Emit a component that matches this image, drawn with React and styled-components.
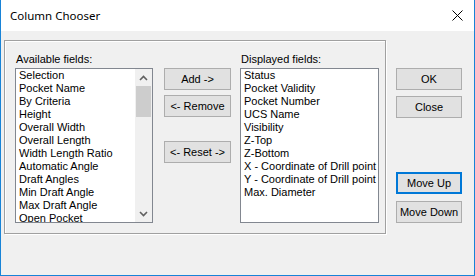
import React from "react";
import styled, { createGlobalStyle } from "styled-components";

const Global = createGlobalStyle`
  html, body {
    margin: 0;
    padding: 0;
    background: #f0f0f0;
  }
  * {
    box-sizing: border-box;
  }
`;

const Window = styled.div`
  width: 475px;
  height: 276px;
  background: #f0f0f0;
  border: 1px solid #1883d7;
  border-top: none;
  display: flex;
  flex-direction: column;
  font-family: "Liberation Sans", Arial, sans-serif;
  font-size: 11px;
  color: #000;
`;

const TitleBar = styled.div`
  height: 31px;
  background: #fff;
  display: flex;
  align-items: center;
  justify-content: space-between;
  padding: 0 10px 1px 9px;
`;

const Title = styled.div`
  font-family: "Noto Sans", "Open Sans", sans-serif;
  font-size: 11.5px;
  color: #000;
`;

const CloseX = styled.svg`
  width: 11px;
  height: 11px;
  margin-right: 1px;
`;

const Body = styled.div`
  flex: 1;
  display: flex;
  padding: 9px 0 0 3px;
`;

const GroupBox = styled.div`
  width: 382px;
  height: 194px;
  border: 1px solid #a0a0a0;
  box-shadow: inset 1px 1px 0 #fff, 1px 1px 0 #fff;
  display: flex;
  padding: 12px 0 0 10px;
`;

const ListColumn = styled.div`
  display: flex;
  flex-direction: column;
`;

const Label = styled.div`
  line-height: 13px;
  height: 13px;
  margin-bottom: 2px;
  padding-left: 1px;
`;

const ListBox = styled.div`
  width: ${(p) => p.$w}px;
  height: 155px;
  background: #fff;
  border: 1px solid #828790;
  display: flex;
  overflow: hidden;
`;

const Items = styled.div`
  flex: 1;
  padding: 0 0 0 3px;
  overflow: hidden;
`;

const Item = styled.div`
  line-height: 13px;
  height: 13px;
  white-space: nowrap;
`;

const ScrollBar = styled.div`
  width: 17px;
  background: #f0f0f0;
  display: flex;
  flex-direction: column;
`;

const Arrow = styled.div`
  height: 17px;
  display: flex;
  align-items: center;
  justify-content: center;
`;

const Track = styled.div`
  flex: 1;
  display: flex;
  flex-direction: column;
`;

const Thumb = styled.div`
  height: 31px;
  margin: 0 1px;
  background: #cdcdcd;
`;

const MidButtons = styled.div`
  display: flex;
  flex-direction: column;
  margin: 15px 0 0 11px;
  gap: 5px;
`;

const SideButtons = styled.div`
  display: flex;
  flex-direction: column;
  margin: 28px 0 0 10px;
`;

const Button = styled.div`
  width: ${(p) => p.$w || 66}px;
  height: 22px;
  background: #e1e1e1;
  border: ${(p) => (p.$focus ? "2px solid #0078d7" : "1px solid #adadad")};
  display: flex;
  align-items: center;
  justify-content: center;
  margin-top: ${(p) => p.$mt || 0}px;
  line-height: 13px;
`;

const available = [
  "Selection",
  "Pocket Name",
  "By Criteria",
  "Height",
  "Overall Width",
  "Overall Length",
  "Width Length Ratio",
  "Automatic Angle",
  "Draft Angles",
  "Min Draft Angle",
  "Max Draft Angle",
  "Open Pocket",
];

const displayed = [
  "Status",
  "Pocket Validity",
  "Pocket Number",
  "UCS Name",
  "Visibility",
  "Z-Top",
  "Z-Bottom",
  "X - Coordinate of Drill point",
  "Y - Coordinate of Drill point",
  "Max. Diameter",
];

const Chevron = ({ up }) => (
  <svg width="9" height="6" viewBox="0 0 9 6">
    <path
      d={up ? "M1 5 L4.5 1.5 L8 5" : "M1 1 L4.5 4.5 L8 1"}
      fill="none"
      stroke="#606060"
      strokeWidth="1.6"
    />
  </svg>
);

const App = () => {
  return (
    <>
      <Global />
      <Window>
        <TitleBar>
          <Title>Column Chooser</Title>
          <CloseX viewBox="0 0 11 11">
            <path d="M0.5 0.5 L10.5 10.5 M10.5 0.5 L0.5 10.5" stroke="#000" strokeWidth="1" />
          </CloseX>
        </TitleBar>
        <Body>
          <GroupBox>
            <ListColumn>
              <Label>Available fields:</Label>
              <ListBox $w={138}>
                <Items>
                  {available.map((f) => (
                    <Item key={f}>{f}</Item>
                  ))}
                </Items>
                <ScrollBar>
                  <Arrow>
                    <Chevron up />
                  </Arrow>
                  <Track>
                    <Thumb />
                  </Track>
                  <Arrow>
                    <Chevron />
                  </Arrow>
                </ScrollBar>
              </ListBox>
            </ListColumn>
            <MidButtons>
              <Button $w={67}>Add -&gt;</Button>
              <Button $w={67}>&lt;- Remove</Button>
              <Button $w={67} $mt={19}>&lt;- Reset -&gt;</Button>
            </MidButtons>
            <ListColumn style={{ marginLeft: 9 }}>
              <Label>Displayed fields:</Label>
              <ListBox $w={139}>
                <Items>
                  {displayed.map((f) => (
                    <Item key={f}>{f}</Item>
                  ))}
                </Items>
              </ListBox>
            </ListColumn>
          </GroupBox>
          <SideButtons>
            <Button>OK</Button>
            <Button $mt={6}>Close</Button>
            <Button $mt={54} $focus>Move Up</Button>
            <Button $mt={7}>Move Down</Button>
          </SideButtons>
        </Body>
      </Window>
    </>
  );
};

export default App;
